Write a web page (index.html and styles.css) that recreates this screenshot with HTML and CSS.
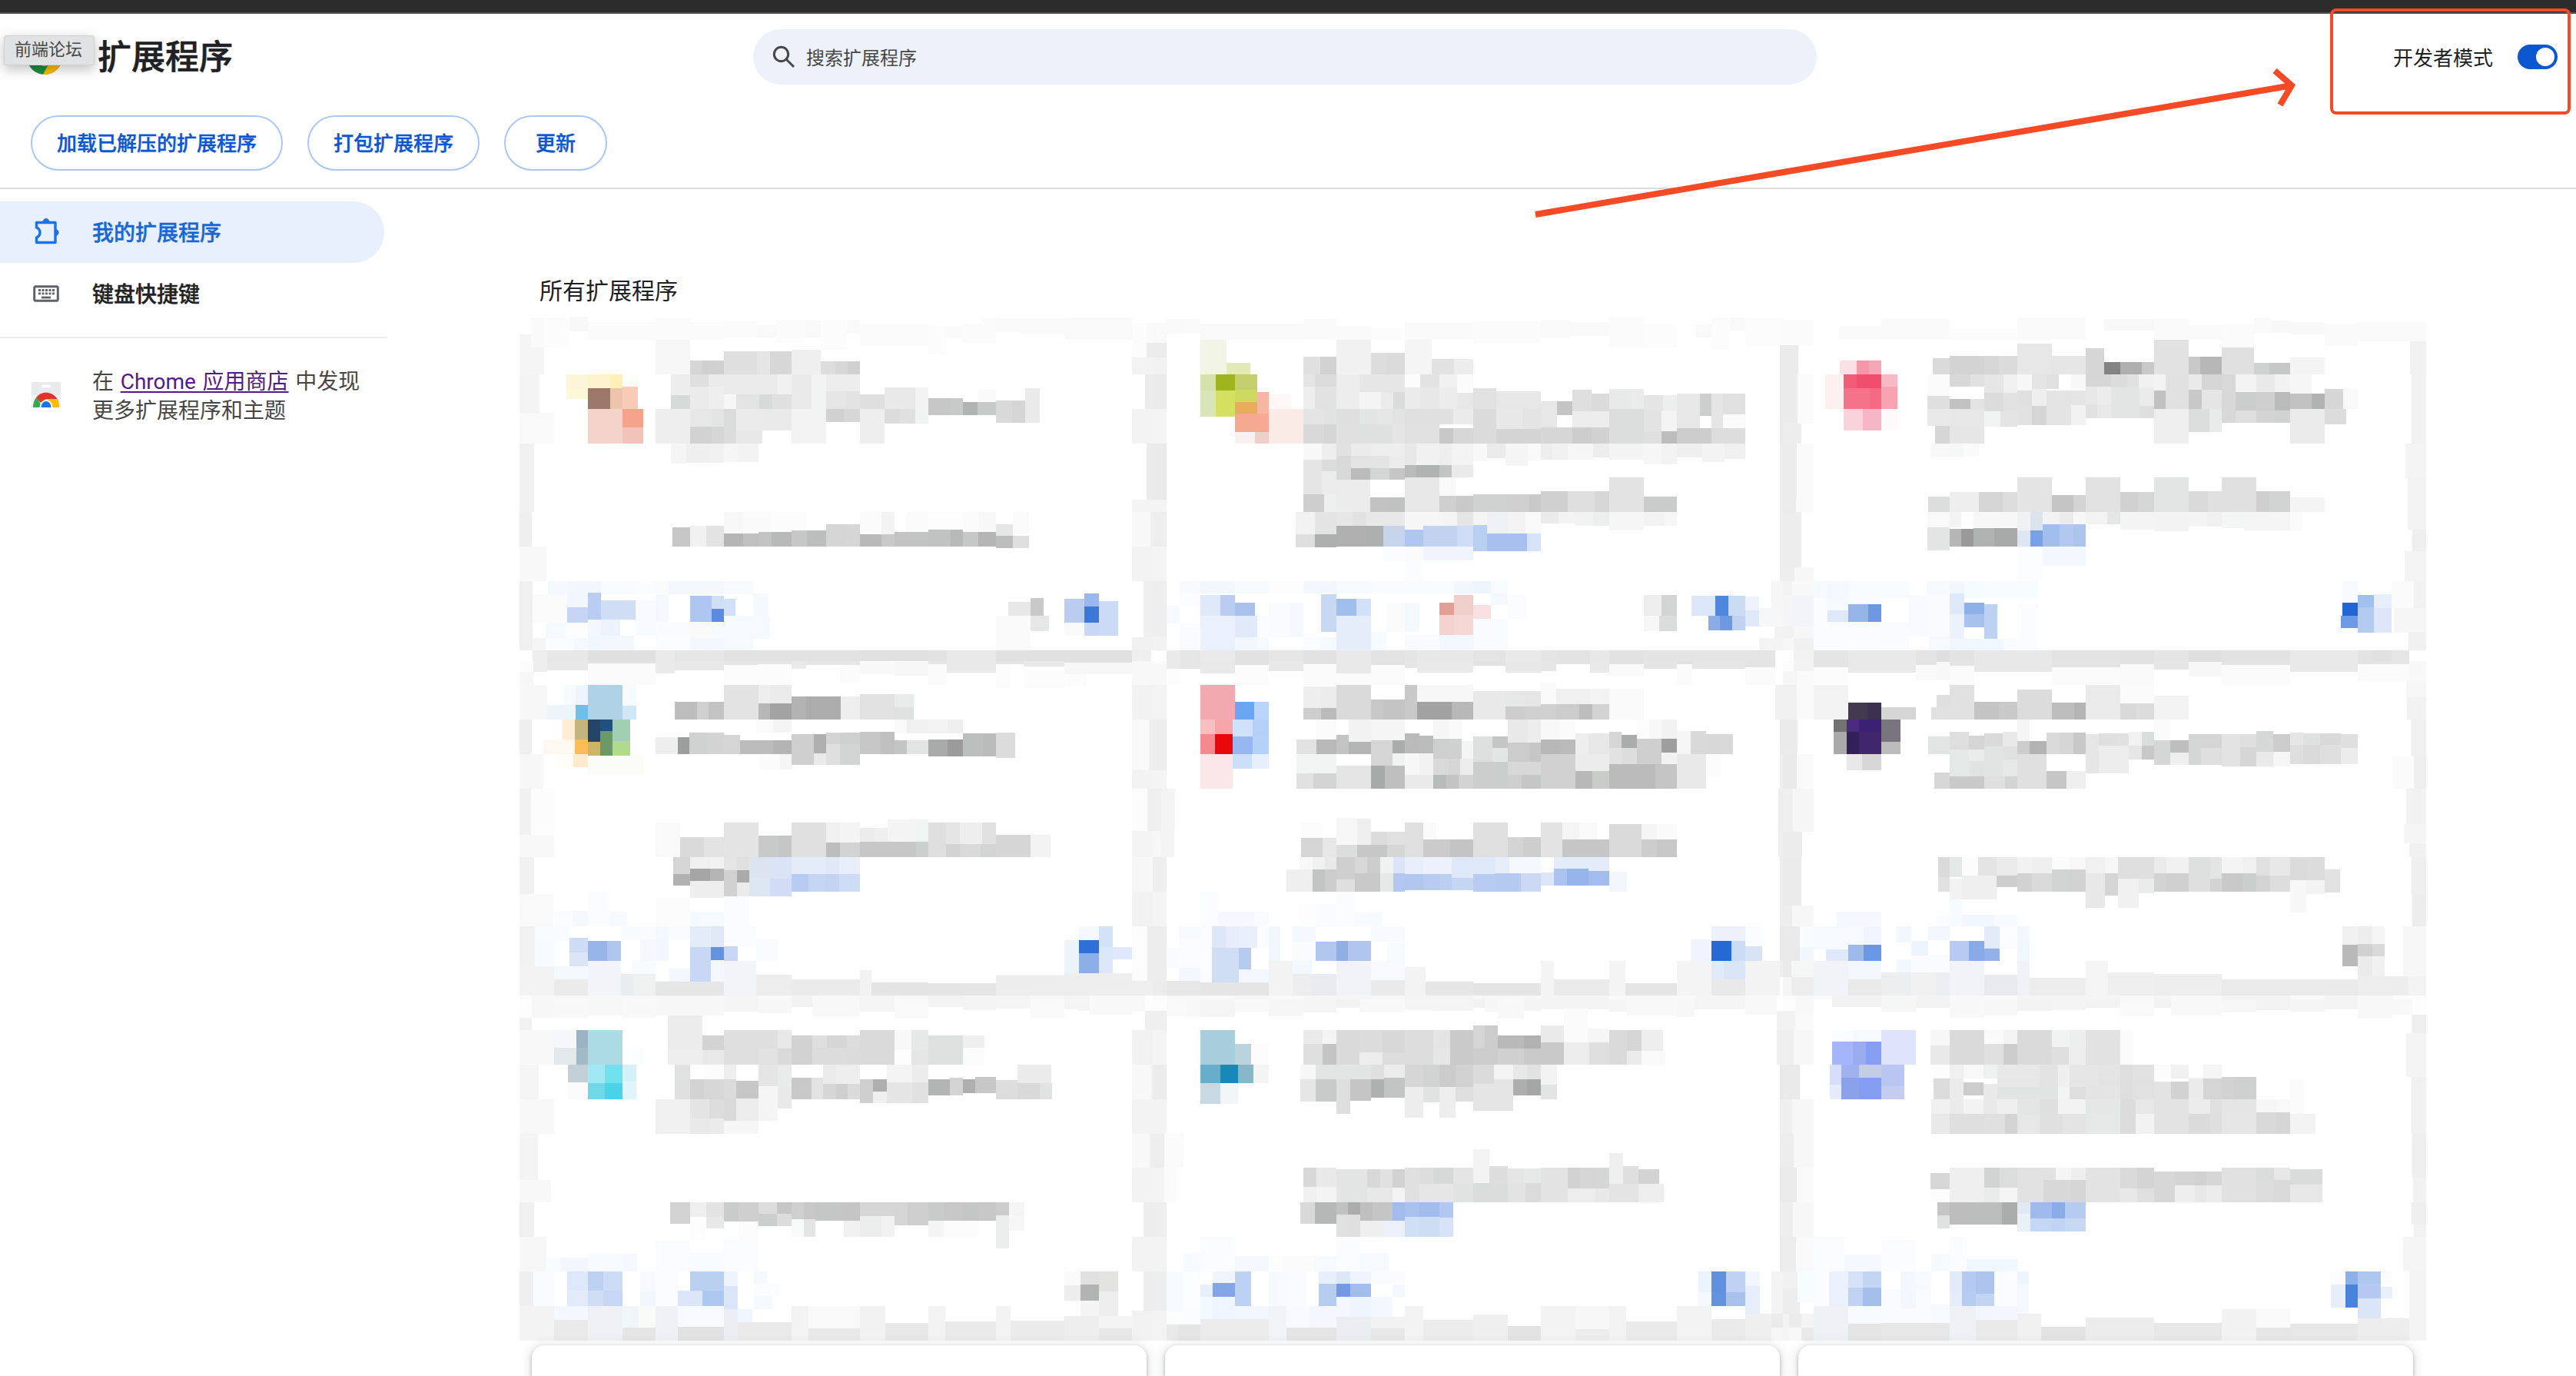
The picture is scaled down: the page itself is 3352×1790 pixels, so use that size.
FILE: index.html
```html
<!DOCTYPE html>
<html lang="zh-CN">
<head>
<meta charset="utf-8">
<title>扩展程序</title>
<link rel="stylesheet" href="styles.css">
</head>
<body>
<div class="window-edge"></div>
<header class="toolbar">
  <div class="toolbar-row">
    <div class="brand">
      <svg class="logo" viewBox="0 0 46 46">
        <circle cx="23" cy="23" r="23" fill="#1e8e3e"/>
        <path d="M23 23L46 23A23 23 0 0 1 21 46L31 27Z" fill="#fbbc04"/>
        <path d="M23 23L3 11.500A23 23 0 0 1 43 11.500Z" fill="#ea4335"/>
        <circle cx="23" cy="23" r="11.500" fill="#fff"/>
        <circle cx="23" cy="23" r="9" fill="#1a73e8"/>
      </svg>
      <h1>扩展程序</h1>
      <div class="tooltip">前端论坛</div>
    </div>
    <div class="search">
      <svg class="search-icon" viewBox="0 0 30 30" fill="none" stroke="#474747" stroke-width="3">
        <circle cx="11.500" cy="11.500" r="9.200"/><path d="M18 18L28 28"/>
      </svg>
      <span>搜索扩展程序</span>
    </div>
    <div class="dev-mode">
      <span>开发者模式</span>
      <span class="toggle"><span class="knob"></span></span>
    </div>
  </div>
  <div class="actions">
    <button>加载已解压的扩展程序</button>
    <button>打包扩展程序</button>
    <button>更新</button>
  </div>
</header>
<div class="page">
  <nav class="sidebar">
    <a class="nav-item active">
      <svg class="nav-icon" viewBox="0 0 40 40">
        <path d="M7.500 7.500H32V33.500H7.500V27C13.500 24.500 13.500 16.500 7.500 14Z" fill="none" stroke="#1a73e8" stroke-width="3.400" stroke-linejoin="round"/>
        <path d="M16 7a4 4.500 0 0 1 8 0zM33 16.500a4.500 4.200 0 0 1 0 8z" fill="#1a73e8" stroke="#1a73e8"/>
      </svg>
      <span>我的扩展程序</span>
    </a>
    <a class="nav-item">
      <svg class="nav-icon" viewBox="0 0 40 40">
        <rect x="4.700" y="10.700" width="30.600" height="18.600" rx="2" fill="none" stroke="#5f6368" stroke-width="3"/>
        <path d="M10 15.500h21M10 19.800h21" stroke="#5f6368" stroke-width="2.800" stroke-dasharray="3 1.500"/>
        <path d="M14 25h12" stroke="#5f6368" stroke-width="2.800"/>
      </svg>
      <span>键盘快捷键</span>
    </a>
    <div class="store">
      <svg class="store-icon" viewBox="0 0 38 33">
        <path d="M0 0H38V33H0Z" fill="#f1f3f4"/><path d="M0 0H38V17H0Z" fill="#e8eaed"/>
        <rect x="13" y="3.500" width="12" height="3.500" rx="1.700" fill="#fff"/>
        <path d="M2 33A17 19 0 0 1 7 19L14 33Z" fill="#34a853"/>
        <path d="M19 22H34A17 19 0 0 1 36 33H24Z" fill="#fbbc04"/>
        <path d="M6.500 20C12 11.500 27 11.500 33.500 22H19L12 27Z" fill="#e0342b"/>
        <path d="M10.500 33a8.500 10 0 0 1 17 0z" fill="#fff"/><path d="M12.500 33a6.500 8 0 0 1 13 0z" fill="#1a73e8"/>
      </svg>
      <p>在 <a>Chrome 应用商店</a> 中发现<br>更多扩展程序和主题</p>
    </div>
  </nav>
  <main>
    <h2>所有扩展程序</h2>
    <div class="masked">
      <svg viewBox="0 174.200 1549.300 1335.800"></svg>
      <svg viewBox="0 0 1530.700 1380"></svg>
      <svg viewBox="0 0 1526 1380"></svg>
      <svg viewBox="0 0 1549.300 1320"></svg>
      <svg viewBox="0 0 1530.700 1320"></svg>
      <svg viewBox="0 0 1526 1320"></svg>
      <svg viewBox="0 0 1549.300 1332"></svg>
      <svg viewBox="0 0 1530.700 1332"></svg>
      <svg viewBox="0 0 1526 1332"></svg>
    </div>
    <div class="cards"><article></article><article></article><article></article></div>
  </main>
</div>
<svg class="annotation" viewBox="0 0 3352 300" fill="none" stroke="#f54a25">
  <rect x="3034" y="13" width="309" height="134" rx="6" stroke-width="4"/>
  <path d="M1998 279L2980 111.500M2960 92L2982 111L2967 136.500" stroke-width="8"/>
</svg>
<script src="mosaic.js"></script>
</body>
</html>
```
FILE: styles.css
```css
* { box-sizing: border-box; }
body {
  margin: 0;
  height: 1790px;
  overflow: hidden;
  background: #fff;
  color: #202124;
  font-family: Roboto, "Noto Sans CJK SC", sans-serif;
}
.window-edge { height: 18px; background: #2c2c2c; border-bottom: 2px solid #555; }
.toolbar { height: 228px; border-bottom: 2px solid #dadce0; }
.toolbar-row { height: 112px; display: flex; align-items: center; }
.brand { position: relative; width: 980px; padding-left: 35px; display: flex; align-items: center; gap: 46px; }
.logo { width: 46px; height: 46px; }
h1 { margin: 0; padding-top: 2px; font-size: 44px; line-height: 60px; font-weight: 500; -webkit-text-stroke: .6px currentColor; }
.tooltip {
  position: absolute;
  left: 5px;
  top: 3px;
  width: 118px;
  height: 39px;
  padding-left: 13px;
  font-size: 22px;
  line-height: 36px;
  color: #474747;
  background: #e1e2e4;
  border: 1px solid #cfd0d2;
  border-radius: 3px;
  box-shadow: 0 5px 16px rgba(0, 0, 0, .25);
}
.search {
  width: 1384px;
  height: 72px;
  padding-left: 25px;
  display: flex;
  align-items: center;
  gap: 14px;
  border-radius: 36px;
  background: #ecf1fa;
  color: #474747;
  font-size: 24px;
}
.search span, .dev-mode > span:first-child { padding-bottom: 2px; }
.search-icon { width: 30px; height: 30px; }
.dev-mode { margin-left: auto; margin-right: 24px; display: flex; align-items: center; gap: 32px; font-size: 26px; }
.toggle { width: 52px; height: 32px; padding: 4px; border-radius: 16px; background: #0b57d0; display: flex; justify-content: flex-end; }
.knob { width: 24px; height: 24px; border-radius: 50%; background: #fff; }
.actions { padding: 20px 40px; display: flex; gap: 32px; }
.actions button {
  height: 72px;
  min-width: 134px;
  padding: 0 32px 3px;
  border: 2px solid #a8c7fa;
  border-radius: 36px;
  background: #fff;
  color: #0b57d0;
  font: 500 26px Roboto, "Noto Sans CJK SC", sans-serif;
  -webkit-text-stroke: .4px currentColor;
}
.page { display: flex; }
.sidebar { width: 504px; padding-top: 16px; }
.nav-item {
  width: 500px;
  height: 80px;
  padding-left: 40px;
  display: flex;
  align-items: center;
  gap: 40px;
  border-radius: 0 40px 40px 0;
  font-size: 28px;
  font-weight: 500;
}
.nav-item span { padding-bottom: 2px; -webkit-text-stroke: .4px currentColor; }
.nav-item.active { background: #e8f0fe; color: #1967d2; }
.nav-icon { width: 40px; height: 40px; }
.store { margin-top: 16px; padding: 37px 0 0 41px; border-top: 2px solid #ebecee; display: flex; gap: 41px; }
.store-icon { width: 38px; height: 33px; margin-top: 20px; }
.store p { margin: 0; padding-top: 1px; font-size: 28px; line-height: 38px; word-spacing: 1.700px; color: #474747; white-space: nowrap; }
.store a { color: #551a8b; text-decoration: underline; text-decoration-thickness: 2px; text-underline-offset: 3px; }
main { padding-left: 166px; }
h2 { margin: 0; height: 154px; padding: 111px 0 0 32px; font-size: 30px; line-height: 44px; font-weight: 400; }
.masked { display: grid; grid-template: 460px 440px 444px / 830px 820px 837px; }
.masked svg { width: 100%; height: 100%; display: block; overflow: hidden; shape-rendering: crispEdges; }
.cards { padding: 6px 0 0 22px; display: flex; gap: 24px; }
.cards article { width: 800px; height: 40px; border-radius: 16px 16px 0 0; background: #fff; box-shadow: 0 2px 4px rgba(60, 64, 67, .35), 0 2px 12px 4px rgba(60, 64, 67, .12); }
.annotation { position: absolute; left: 0; top: 0; width: 3352px; height: 300px; }
```
FILE: mosaic.js
```js
// Each run is "top bottom x colour x colour x ...": tiles between successive
// x values. Two-digit colours are greys, "-" leaves a gap.
const cards = [
`230 296 177 fb 342 fb 426 fb 508;215 230 342 fb 426;227 287 508 fb 588;241 287 588 f9 635;222 305 635 fb 706;224 287 706 f9 743;222 334 743 fc 806;222 270 806 f9 838;235 319 838 fb 1004;244 350 1004 fc 1047;244 290 1047 fa 1088;235 307 1088 fb 1169;215 235 1135 fb 1169;215 267 1169 f9 1228;215 273 1228 f9 1335;212 296 1335 f9 1499
212 325 39 fa 71 fc 133;209 264 133 f8 177;276 325 11 f5 39;325 427 11 f5 71;427 572 11 f4 60;572 688 11 f9 95;688 947 11 f1 47;947 1077 11 ef 41;1077 1208 11 f8 77;1208 1469 11 f0 43
232 363 1499 fc 1534 fa 1568;308 363 1534 ec 1568;363 427 1499 f3 1568;427 558 1531 ec 1568;558 688 1499 f3 1568;688 900 1534 eb 1568;900 947 1499 f4 1568;947 1077 1499 f8 1544 f0 1568;1077 1208 1499 f3 1568;1208 1420 1527 ef 1568;1420 1469 1499 f1 1568
427 520 125 fdf5da 177;427 479 177 fdf4cf 231 fef0b8 261 fdfef7 299;479 520 125 fef8d8 177;479 558 177 9b7869 231 eec4ad 261 f9cbb9 299;473 479 261 f9cbb9 299;558 688 177 f4d3cb 261;558 627 261 f6a38b 312;627 688 261 f2c3b9 312
296 427 342 f7 426;375 427 426 d6 454 d0 508;340 427 508 df 588 e5 620 d7 672;334 427 672 ef 743;377 427 743 dd 778 d7 808 d0 838
427 505 379 ed 426;427 473 426 df 470;427 502 470 eb 637 f1 672 ea 721 f1f4f3 756;473 558 426 eb 470 ee 508;502 558 508 f6 538 e4 594 d6dad8 625 e0 672 ea 721 f2f4f3 756;505 558 379 d6dad8 426;427 491 756 ed 838;491 558 756 e6 805 e3 838;502 558 838 df 898;476 558 898 e9 973 f3 1004;517 581 1004 c7 1057 c8cac9 1088;531 581 1088 b2b4b3 1124 c8cac9 1169;486 531 1124 fa 1169;526 610 1169 d9 1208 d5 1239;479 610 1239 ea 1275
558 688 342 ee 426;558 624 426 e7 478 e2e5e4 508 dc 538;558 639 538 eb 600 ea 672;624 688 426 d2 478 d5d7d6 508 dc 538;639 688 538 e7 601;558 688 672 f3 756;558 607 756 d1 799 d7 838;558 688 838 ee 898;558 613 898 dc 935 e0 973 f2f4f3 1004
688 764 379 f5 416;688 761 416 ef 468 f1 508;688 758 508 f6 542 f3 592
947 1028 508 f8 554 fa 622 fc 710;947 1031 838 fb 890 f3 922;947 1022 951 fb 1004 fd 1088 fb 1126 f8 1169;1005 1077 383 c7 426;999 1077 426 f1 465 e3 508;1028 1077 508 b5 554 c0 592;1022 1077 592 c2c4c3 623 b9 672;1016 1077 672 c7 709 bcbebd 756;993 1077 756 d5 805 d6 838;1031 1077 838 b9 890 c9 922;1022 1077 922 c3 965 c2c4c3 1004;1013 1077 1004 c1c3c2 1058 b9 1088;1022 1077 1088 c6c8c7 1126 b5 1169;993 1037 1169 e6 1210;1037 1083 1169 bcbebd 1210 df 1249;947 1031 1210 fb 1249
1208 1257 80 f5f9ff 127 f2f7ff 209 f8fbff 293 fafcff 342 fb 374 f3f7ff 426 f4f8fe 508 f7fbff 579;1257 1365 43 fb 127;1257 1307 127 f2f7fe 177;1307 1365 127 c7d5f4 177;1251 1353 177 b9cdf2 209;1281 1353 209 cfddf5 293 f8faff 342;1257 1362 342 f5f8ff 374;1263 1362 426 afc6f0 478;1263 1312 478 d0def6 508;1312 1362 478 5a8bdf 508;1275 1339 508 d1dff7 536;1254 1339 579 f5f9ff 616;1339 1425 508 f5faff 620
1353 1414 177 f3f8ff 209 edf3fd 256 - 293 f7fbff 342;1365 1423 75 f5faff 124 fd 177;1362 1423 342 fafbff 426 f9 478 f6faff 508;1414 1469 177 f1f7ff 209 f3f8fe 290;1423 1469 75 fafcff 144 f4f8ff 177 - 342 fafcff 426 f3f7ff 508 f5faff 579;1423 1469 43 f5 75
1286 1339 1198 e7 1253;1272 1339 1253 c9 1284;1339 1469 1169 fa 1253;1339 1397 1253 e6e8e7 1297;1275 1365 1335 b8cdf0 1383;1254 1304 1383 9ab8ee 1419;1304 1365 1383 3c78d8 1419;1283 1414 1419 cbdbf5 1465;1365 1414 1335 fa 1383 c8d8f4 1419
1469 1519 43 ee 78 e7 177 e0 342 ea 388 e6 508 e2 838 e1 1004 e2 1049 e9 1169 e1 1499 ef 1546`,
`45 102 34 f9 78 fa 116;63 126 116 f9 366;45 126 366 fa 446;72 126 446 fa 530;80 126 530 fc 612;61 126 612 fa 678 fa 778;53 137 778 fb 943;47 120 943 fa 1012;58 110 1012 f9 1109;37 155 1109 fb 1193;68 155 1193 fc 1273;66 117 1318 f9 1357;39 165 1357 fc 1402;39 90 1402 f9 1439;42 147 1439 fc 1523 fb 1568
60 138 0 f9 34;138 195 0 ec 34;195 261 0 f2 34;261 396 0 eb 34;396 531 0 f4 34;531 750 0 ea 34;750 798 0 f4 34;798 933 0 ee 34;933 1068 0 f4 34;1068 1285 0 ee 34;1285 1338 0 f2 34
147 531 1523 eb 1568;531 1068 1524 ed 1568;1068 1173 1503 f6 1568;1173 1245 1473 f7 1553 f2f4f8 1568;1245 1290 1510 f3 1568;1290 1338 1473 f4 1568
126 261 116 f2f4e6 179;216 261 179 e3eab8 237;261 324 116 d5e2ae 153 9fb51d 200 c3d06b 254;324 426 116 d8e5b9 153 d6e060 200;321 369 200 cdda61 254;369 414 200 e9ac5c 254;330 414 254 f8b5a4 282;414 486 200 f4a990 254 f8a995 282;486 531 200 f7f2ef 248 eed0c8 282;339 396 282 fef7f6 336;396 531 282 faebe7 366
126 261 446 f1 530;192 261 366 e0 407 d2 446;177 261 530 dd 567 db 612;126 312 612 f5 678;201 261 678 e2 732 ed 778;261 309 366 e5 394 db 446;261 396 446 ed 502 e6 612;261 312 612 fc 650 e3 696 f1 739 fb 778;309 396 366 ee 394 e2 446;330 396 502 f4 554 eb 584 db 612;312 396 612 eb 650 e8 696 ec 739 e7 778;312 333 739 fc 778;315 396 778 e2 834;327 396 834 e7 943;366 468 943 e7 982;366 420 982 c4 1019;321 405 1019 df 1066;336 405 1066 db 1109;318 396 1109 e7eae9 1165 eb 1193;342 402 1193 e5 1239 edefee 1273;336 471 1273 e7 1329 - 1357 e5 1385;336 423 1329 cdcfce 1357;336 417 1385 e1 1439
396 456 366 e4 416 e0e3e2 446 df 502 e2e5e4 546 e6 582 e1e4e3 612 e0 730 eb 778;396 531 778 db 834;396 474 834 e8 897 e4 943;405 468 1019 ed 1109;396 531 1109 dbdedd 1193;402 483 1193 e3 1236 f4 1273;417 471 1385 fb 1439;456 531 366 d9 416 d5 446 e0 502 dfe0e0 582 e5 612 e1 696;471 531 696 c8 730 d7 778;474 531 834 d4 943;468 531 943 d6 1019 cd 1066 d1 1109;483 531 1193 df 1236 bd 1273;471 531 1273 cd 1357 dd 1439
531 594 366 f8 411 ee 446;531 579 446 e1 482 eb 530 ee 612;531 615 612 e8 640 f1 696 ee 726 f3 778;531 600 778 f8 812;531 588 812 eb 857;531 618 857 f5 911;531 597 911 f9 943;531 594 943 ee 971 f1 1008 f6 1070;531 585 1070 ed 1109;531 594 1109 f4 1193;531 612 1193 f6 1236 f3 1273;531 585 1273 ef 1335;531 603 1335 f3 1389;531 591 1389 f0 1439;579 672 446 d9 482;579 627 482 e4 575 ec 612;594 729 366 e5 411;594 639 411 dadddc 446;639 798 411 ec 446;672 798 446 ec 528;627 672 482 bb 528 d3d6d5 575 c6 612;615 663 612 b9bbba 640 b1b3b2 696 c3c5c4 726 ea 778;663 798 612 e7 696;663 735 696 f9 737
729 798 366 ce 416 edf0ef 446;741 798 528 c2 575 c0c2c1 612;735 798 696 cf 737 c9 778;729 798 778 cfd2d1 857 d0 915 c9 943;717 798 943 d0 1008 df 1073 d7 1109;663 798 1109 e3 1193;738 798 1193 cacccb 1273
798 885 347 f2 394 e4 446;798 853 446 e6 485 e2 519;798 853 519 e8 612;798 867 612 f6 707 f4 739;798 852 739 e5 778;798 852 778 f4 812 eef0f4 862 f3 905 f9 943;798 843 943 eb 986 f3 1027;798 852 1027 f2 1070 edefee 1109;798 870 1109 f6 1193;798 852 1193 f3 1243 f6 1273;885 936 347 df 394 aeb0af 446;853 933 446 b0 519 aeb0af 560 c6d5ec 612;867 933 612 afc7ef 657;852 933 657 c2d3f2 739 cedcf5 778;849 951 778 b9cff1 812;882 951 812 a7c0ed 909 d7e3f8 943;852 882 812 eef0f4 862 f3 905 f9 943;933 987 560 fafcff 612 fb 657 f0f5fd 778;987 1068 612 fafcff 657
1068 1116 65 f8faff 116 f2f7ff 200 f6fbff 282 fd 366 f2f7ff 446 f5fafe 530 f9fbff 612 f8fbff 732 f2f7ff 778 edf5ff 821 f8fbff 862;1116 1163 65 fafcff 116;1122 1203 116 e0e9f9 164 bacdf1 200;1152 1203 200 a9c2ed 248 - 282 f9fbff 334 f4f8ff 366;1203 1338 116 eaf1fc 200;1203 1286 200 e2eaf9 254 fbfcff 282 f9fbff 334 f4f8ff 366;1163 1233 34 f6f9ff 65;1233 1338 65 f9fbff 116;1286 1338 200 f3f7fe 254 f6faff 282 - 366 fafcff 409 f4faff 446;1119 1266 409 c7d8f3 446;1137 1203 446 a1bfeb 495 d3e0f9 530;1203 1338 446 e5ecfa 530;1266 1338 530 f7fbff 567;1152 1266 567 fb 612 f4f8ff 648;1277 1338 612 f8faff 696 f3f7ff 778 f7f9fd 862
1152 1200 696 e39f96 732;1122 1200 732 f0cec9 778;1161 1215 778 f7e0df 821;1200 1278 696 f3d3d0 732 f5d8d6 778;1116 1161 821 f4f9ff 862;1122 1215 862 fbfcff 908;1215 1338 778 fafbff 862
1122 1203 1193 ee 1236 d3d5d4 1273;1203 1263 1193 f7 1230 dbdddc 1273;1125 1203 1309 dde7fa 1366 5087dc 1398 cbdbf4 1439;1203 1260 1350 8aade6 1378 6d99e3 1407 bfd2f2 1439;1128 1182 1439 edf2fc 1473;1182 1245 1439 dee8f9 1473
1338 1410 34 ea 68 e6 116;1338 1428 116 ea 200;1338 1395 200 e2 282;1338 1419 282 e6 366;1338 1392 366 e2 446;1338 1428 446 e9 530;1338 1398 530 e3 612;1338 1407 612 e5 642;1338 1425 642 e8 778;1338 1392 778 e4 857;1338 1425 857 e9 943;1338 1419 943 e5 980;1338 1395 980 e3 1062;1338 1425 1062 e8 1109;1338 1392 1109 e2 1193 e4 1310;1338 1404 1310 e5 1512`,
`48 148 0 fb 73;72 123 134 fa 233;43 126 233 fa 396;84 126 396 fc 556;39 126 556 fa 718;45 90 762 f8 881;42 126 881 fa 963;69 126 963 fa 1041;66 156 1041 fb 1118;39 99 1118 fa 1158;51 99 1158 f8 1203;57 105 1203 f8 1285;63 150 1285 fa 1364;57 132 1364 fa 1526
148 261 0 eb 36;261 453 0 eb 35 fb 73;453 531 0 ed 44;531 743 0 ec 33 fa 73;743 798 0 ec 31 f9 73;798 1014 0 ed 44;1014 1068 0 ee 27 f7 73;1068 1125 0 f3 22 f8 73;1125 1245 0 f5 22 f2f4f8 73;1245 1290 0 f2 26 f7 73;1290 1338 0 f7 26 f1 73
132 261 1487 f1 1526;261 531 1491 f2 1526;531 663 1477 f4 1526;663 867 1483 f3 1526;867 951 1493 ef 1526;951 1068 1475 f4 1526;1068 1173 1444 fb 1497 f2 1526;1173 1269 1449 f6 1526;1269 1338 1484 f1 1526
207 261 135 f9e1e7 175 f696a9 204 f5a7b5 233;261 315 144 f35b76 175 f04e6b 233 f8b9c7 272;261 396 100 fcf0f1 144;309 315 233 f8b9c7 272;315 396 144 f57389 206 f46983 233;309 396 233 f7a3b1 272;396 480 144 f8d2db 190 f7b6c6 233 fdfafc 272
198 261 356 da 396;189 261 396 d3 478 d7 513 db 556;141 261 556 e7 638;189 261 638 e6 718;159 309 718 d6 762;213 261 762 83 800 af 851 c9 881;126 261 881 e2 963;192 261 963 c9 990 b7 1041;156 261 1041 e0 1118;216 261 1118 cfd2d1 1154 c6c8c7 1203;195 261 1203 f4 1285
261 345 343 fb 396;261 309 396 d8 445 e1 478;261 333 478 e6 523 f0 556;261 324 556 f7 591;261 318 591 e5 625 e1 655 - 684 f8 718;261 312 718 d6 779 dc 817 e1 845 f1 881;261 324 881 f3 908;261 396 908 e1 963;261 321 963 ea 994 d5 1041;261 450 1041 d8 1074;261 330 1074 f3 1123 e9 1167 f2 1203;261 336 1203 f6 1254
345 396 343 df 396;357 405 396 c2 445 e3 478;333 405 478 dc 523 e2 556;324 384 556 e0 591;318 384 591 ef 625;324 459 625 e4 684 e5 718;309 378 718 e8 746 ec 779;312 432 779 e2e5e4 846;312 384 846 eb 881;324 396 881 c1 908;321 396 963 c8 994 e5 1041;330 402 1074 cbcecd 1123 cf 1167 babcbb 1203;336 396 1203 c2 1254 b1b3b2 1285;318 396 1285 d6 1329 f9 1364
396 462 343 e9 396 e7 478;405 465 478 f1f4f3 516 e4 556;384 459 556 e2 591 d5 625;381 459 684 f2 718;378 432 718 e2 746 e9 779;384 432 846 de 881;396 531 881 ef 963;396 486 963 dbdedd 1012 e9ebea 1041;402 450 1074 de 1123 d4 1167 d1d3d2 1203;396 531 1203 eb 1285;396 456 1285 dc 1336;462 531 361 d6 396 e6 478;531 582 350 f8 396 f5f8f7 428 fa 465
738 798 345 dbdedd 396;720 798 396 ee 465 d5 521 dd 556;663 798 556 e4 638;732 798 638 c5 689 d4 718;663 798 718 e2 800;720 798 800 d1 842 d5 881;663 798 881 e2e5e4 963;717 798 963 da 1008 e0 1041;663 798 1041 e0 1123;717 798 1123 cf 1154 d1d4d3 1203;741 798 1203 f4 1285
798 858 343 f9 396 f3 423 fe 452 f7 556;798 870 556 eff1f2 587 dce3ec 616;798 846 616 f3 656 eb 689 f7 718 f3 769 e4e7e6 800;798 866 800 f4 881;798 872 881 f3 963;798 855 963 f4 1007 f0 1041;798 860 1041 f3f6f5 1094;798 869 1094 f5 1203 fb 1233;858 948 343 e2e5e4 396;864 933 396 b6 423 9a 452;861 933 452 b0b2b1 501 a8aaa9 556;870 933 556 dfe6f3 587 7aa0e7 616;846 933 616 a2beed 656 b3c7ef 689 abc5ef 718;933 1068 556 fcfdff 616;933 1008 616 f4f8fe 718
1068 1134 73 f5faff 106 f6f8ff 155 f8fbff 299 - 341 f6faff 396 f1f6ff 430 f5fcff 478 f9fcff 508 f6fcff 606;1134 1338 73 fafcff 155 f9fbff 233;1134 1182 106 f5faff 155;1182 1227 106 dee8f8 155;1158 1227 155 95b5e8 202 6c99e1 233;1227 1338 155 fafcff 233 fafbff 299;1125 1284 299 f8faff 341 f9fbff 396;1284 1338 346 f6f9ff 396;1116 1197 396 dde8f9 430;1152 1197 430 8eb1e8 478;1197 1293 396 ebf2fc 430;1197 1248 430 a9c2ed 478;1158 1293 478 bdd1f2 509;1293 1338 396 f1f7ff 523 f9fbff 606;1158 1338 556 fafcff 606
1068 1152 1327 f8faff 1364;1152 1203 1327 2266d6 1364;1203 1251 1324 6d9ae2 1364;1122 1170 1364 a2c0ed 1402;1119 1173 1402 e8effb 1444;1170 1269 1364 b5caf1 1402;1173 1269 1402 dde7f9 1444
1338 1404 73 e5 155;1338 1425 155 e9 315;1338 1395 315 e4 365;1338 1383 365 df 396;1338 1398 396 e3 454;1338 1422 454 e8 638;1338 1404 638 e3 800;1338 1392 800 e2 881;1338 1413 881 e5 963;1338 1383 963 df 1041;1338 1395 1041 e2 1203;1338 1422 1203 e9 1364;1338 1392 1364 e3 1398;1338 1401 1398 e1 1444;1338 1395 1444 e6 1486;1338 1419 26 f2 73`,
`0 42 11 fc 45 ee 78;42 93 11 f6 45;0 36 78 e8 177;0 9 177 e3 342;9 93 177 fb 342;0 48 342 ea 388;0 36 388 e8 508;15 93 508 fc 592;0 15 508 e6 592;0 12 592 e6 672;12 93 592 fc 672;0 30 672 e9 707;0 15 707 e6 838;15 84 790 fb 838;6 51 838 f8 922;3 57 922 f7 1004;0 12 1004 e6 1049;12 93 1004 fb 1049;0 45 1049 e9 1169;0 12 1169 e3 1236;12 105 1169 fc 1204;0 21 1236 e8 1335;21 105 1236 fc 1335;0 6 1335 e1 1499;6 51 1335 f7 1499;51 96 1335 fc 1388;0 93 1499 f8 1568
93 228 11 f7 78;228 363 11 ef 41;363 498 11 f7 69;498 678 11 f1 39 fc 95;678 765 11 f8 95;765 909 11 f1 47;909 1035 11 f9 93;1035 1305 11 f2 49;1191 1305 11 f3 95
93 228 1499 f2 1568;228 426 1499 f9 1540 ef 1568;426 498 1499 f3 1568;498 663 1499 fc 1536 ef 1568;663 765 1499 f4 1568;765 900 1499 f7 1553 f0 1568;900 1035 1499 f2 1568;1035 1248 1499 fc 1536 ed 1568;1248 1305 1499 ef 1568
93 171 119 f6fbff 147 edf6fc 177;93 228 177 afd2e7 261;93 174 261 f6fbff 295;171 228 78 edf5fa 147 6fbfe8 177;174 228 261 d0e8f6 295;228 306 116 feedd2 146 c4b580 177;228 315 177 24446a 207;228 273 207 20507e 237;228 312 237 a0d0b1 280;306 363 69 fef8f0 146 fbbd58 177;315 375 177 ccb564 207;273 375 207 6a9a68 237;312 369 237 b1da8c 280;363 414 100 fffdf8 142 fdebcd 177;369 444 177 fafcf5 312
159 228 388 bd 442 d0 470 c3 508;93 228 508 e3 592;93 165 592 ee 620 eb 672;165 228 592 b7 620 a3 672;138 228 672 b3 707 ad 791 ee 838;129 228 838 e2 922;129 180 922 eaecec 969;180 228 922 e0e2e1 969
228 279 586 fb 627 f4 672;228 282 922 fa 952 f0 1004 f3 1051 ef 1088;297 363 342 ee 396 9c9e9d 424;279 363 424 cfd2d1 466 d3 508;288 363 508 d5 547;309 363 547 bc 627 b4 672;285 405 672 cf 726;285 360 726 af 756;279 324 756 d4 790 cfd1d0 838;324 405 756 df 790 d2d5d4 838;360 405 726 ea 756;276 363 838 c7 889 c0 922;309 363 922 c2c5c4 952 e2e5e4 1004;306 372 1004 a9abaa 1051 9b 1088;282 372 1088 bcbfbe 1137 babcbb 1169;279 378 1169 dc 1215;363 423 594 fb 644 f5 672
630 765 342 f9 401;687 765 401 da 459 e3 508;630 765 508 e4 592;681 765 592 c8cac9 640 c6 672;630 765 672 e0 756;630 708 756 f0 790 f4 838;708 765 756 bd 790 d3 838;651 705 838 ec 874 ef 905;618 705 905 f4 973 f1f4f3 1004;705 765 838 c7 975 cdcfce 1004;630 765 1004 df 1047;630 714 1047 e5 1081 ee 1135 e1 1169;714 765 1047 d3 1081 da 1131 d2d5d4 1169;678 765 1169 d6 1253 f3 1301
765 831 385 d5 426;765 810 426 f0 474 f2 508;765 816 508 e5 539 e0 569;831 876 385 b0b3b2 426;810 858 426 a6 474 b5 508;816 918 508 d1 539;816 864 539 aa 569;858 924 426 ee 508;864 918 539 eb 569;765 849 569 dce4f0 619 dbe4f7 672;849 918 569 dde7f3 619 d1ddf6 672;765 831 672 e4ebf9 756 e1e8f7 788 e8effa 838;831 900 672 b7ccf0 713 c5d6f3 756 c2d4f2 788 cfdcf5 838
900 1035 177 fafcff 229;975 1035 95 fafcff 140 f5f9ff 177;978 1035 229 f6faff 273;924 1035 342 fc 426;978 1035 426 f5faff 508;918 1035 508 fafcff 569
1035 1092 49 f8fbff 133;1092 1191 49 f6fbff 95;1080 1137 133 cfdcf6 177;1137 1191 133 dbe5f7 177;1092 1170 177 98b5ea 224 adc5ef 258;1035 1086 258 f7fbff 305 f9fbff 342 f5f8ff 373 f9fbff 426;1086 1170 305 f5f9ff 342 f3f7ff 373;1035 1116 426 e4ecfa 476 e0e8f8 508 fafcff 586;1116 1251 426 c8d8f4 476;1116 1167 476 6393df 508;1113 1170 508 c7d6f4 541;1167 1251 476 f3f7fe 508;1086 1170 586 f9fbff 638
1191 1242 95 f4f8ff 177;1170 1305 177 f2f4f9 258;1170 1221 286 f7faff 342;1200 1251 373 f3f7ff 426;1170 1305 508 f2f4f9 586;1242 1305 95 eb 177;1221 1305 258 e8edef 287 eff1f0 342;1251 1305 342 e6 508;1224 1305 586 ed 672;1242 1305 672 eb 838;1206 1305 838 f2 866;1254 1305 866 e4 1004;1257 1305 1004 e5 1169;1227 1305 1169 ed 1335;1218 1305 1335 ee 1499
1089 1218 1335 ebf3fb 1370;1035 1089 1370 f5f9ff 1419;1035 1116 1419 d3e1f9 1452;1089 1140 1370 2f6fd7 1419;1140 1218 1370 8cafe8 1419;1116 1218 1419 dce7fa 1452;1116 1164 1452 dfe8fb 1499
1305 1320 11 fb 41 f7 508 f5 592 f8 672 f2 722 f8 838 f5 922 f8 1004 f2 1088 f4 1253 f8 1335 f4 1395 f8 1530`,
`0 12 0 fb 34;12 93 0 f8 34;93 228 0 f3 34;228 426 0 ed 34;426 498 0 f4 34;498 663 0 ef 21 f4 54;663 765 0 f7 21 f4 52;765 900 0 ee 34;900 1035 0 f4 34;1035 1248 0 ed 34;1248 1305 0 ec 34
0 30 34 ea 68 e6 116;0 48 116 e9 200;0 15 200 e2 282;0 39 282 e8 366;0 12 366 e2 446;0 48 446 e9 530;0 15 530 e2 612;0 27 612 e6 642;0 45 642 e9 778;0 18 778 e2 857;0 45 857 e8 943;0 39 943 e6 980;0 12 980 e3 1062;0 45 1062 e9 1109;0 12 1109 e2 1193;0 30 1193 e5 1273;0 12 1273 e2 1310;0 30 1310 e6 1439;0 24 1439 e4 1512
30 93 34 fd 68;15 93 200 fc 282 - 366 fb 446;48 93 446 fb 530;15 93 530 fb 612;12 60 1109 f9 1193;12 93 1273 fb 1310;24 93 1439 fb 1512
93 228 1512 f1 1564;228 363 1523 eb 1566;363 498 1523 ef 1564;498 663 1519 ed 1555;663 765 1519 ef 1547;765 1035 1523 ed 1568;1035 1170 1523 ea 1568;1170 1233 1523 ef 1551
93 228 116 f2aab0 200;159 228 200 6ca5f1 246 bbd4f9 282;228 285 116 f8bfc1 151 f8a5a8 194;285 363 116 f6898f 151 ea0808 194;228 294 194 d0e2f9 243 b4d0f8 282;294 363 194 96b7ef 243 b6d1f9 282;363 498 116 fce7e8 194;363 420 194 cbdff9 241 e7effc 282
99 183 366 ee 409 ec 446;183 228 366 ce 409 bb 446;93 228 446 da 530;150 228 530 c8 560 c4 612;93 228 612 c9 642;93 159 642 f7 778;159 228 642 a2 726 b8 778;117 228 778 e9 857;117 177 857 e5e8e7 904 e6 943;177 228 857 cc 904 d0 943;84 168 943 f9 980;108 168 980 f0 1062 f3 1109;108 228 1109 f9 1193;168 228 943 d0 980 cc 1036 bd 1068 d3 1109
228 315 398 fb 446 - 476 f2 530 f5 612;228 300 681 f6 719 f9 750;228 318 862 e9 911 ed 943;228 306 943 f8 990 fb 1027;228 303 1176 fc 1205 f8 1236 f2 1273
306 363 349 e2 398 b9 446;288 363 446 c1c4c3 476;315 363 476 b5 530;309 408 530 d5 582;309 360 582 a9acab 612;282 360 612 ba 648;291 360 648 bc 681;303 381 681 cdd0cf 719 d1 750;312 381 719 d0 750 f3f6f5 778;294 393 778 dde0df 825;294 339 825 c5 862;339 393 825 e3e6e5 862;318 393 862 cc 914 c6 943;306 363 943 b8 990 ba 1027;282 363 1027 ee 1058 e7 1109;276 339 1109 d6 1139;288 339 1139 aaadac 1176;303 402 1176 cf 1236;303 357 1236 9e 1273;273 363 1273 f6 1307 d9 1344;285 363 1344 d8 1409
363 438 349 f3f5f4 390 f1f4f3 446;438 498 349 e1 390 d4 446;408 498 446 e5 530 a8aaa9 564 bf 612;360 408 582 f0f3f2 612;360 444 612 f7 648 f2 681;381 444 681 da 719 d6 747 ed 778;444 498 612 ea 681 b8bbba 713 c3 743 d3 778;393 498 778 cbcecd 862;393 444 862 d8 943;444 498 862 cf 896 c4c7c6 943;363 498 943 d1 1027;363 429 1027 ec 1109;429 498 1027 b8 1068 caccca 1109;339 402 1109 e2 1139 dbdedd 1176;357 402 1236 f2 1273;402 498 1109 bb 1221 c5 1273;363 498 1273 e9 1344;363 446 1344 fc 1382
630 690 360 fc 412;690 765 360 d5 413 e7 446;612 717 446 f7 497;615 717 497 ef 530;666 717 530 dc 569 e1 612;717 765 446 dbdedd 497 c7 569 d6 612;630 765 612 e0 657;630 696 657 fa 689;696 765 657 cb 722 c4 778;630 765 778 e0 862;687 765 862 d4 900 ce 943;630 765 943 e3 995;630 696 995 f5 1036 f9 1079;696 765 995 c6 1109;636 765 1109 da 1187;636 696 1187 f5 1225 fa 1273;696 765 1187 cd 1225 c8 1273
765 813 357 f8 388 f1 418 e9 446;765 852 446 cf 491;765 828 491 d8 521 cd 553;765 828 553 eff2f1 584 dbe5f7 612;765 831 612 e8effb 657 ecf1fb 726;765 846 726 dfe8f8 778;765 831 778 dfe8f8 833 e7eefb 866 f5f8fe 943;813 900 325 ef 388 c1c4c3 418 cc 446;852 900 446 df 491;828 900 491 c9 553 e5e8e7 584 b2c8ef 612;831 894 612 b1c7ef 657 b8ccf1 697 bbcff2 726;846 894 726 c5d6f2 778;831 900 778 b8ccf1 833;828 900 833 b5caef 894 ccd9f4 943;765 825 974 e5ecf9 1109;825 876 943 dce6f9 974;810 876 974 abc3ee 1006 97b4ea 1058;819 876 1058 a2bced 1109;822 900 1109 f3f7fd 1152
900 1035 116 fafcff 158 - 446 fafcff 491;978 1035 158 f5f9ff 246 f9fbff 282;948 1035 357 fd 398 f9fbff 446;981 1035 491 f6fbff 558
1035 1083 63 f7faff 116;1083 1200 63 fbfcff 116;1120 1198 34 f9fbff 63;1035 1119 144 dde7f7 177 e7edfa 209 e9f0fb 254 fafcff 282 f0f7ff 310;1119 1254 144 cfdef5 209;1119 1203 209 b7cbef 239;1119 1170 282 f1f7ff 310;1203 1254 209 f3f7ff 282;1198 1248 63 f3f7ff 116;1035 1254 116 fafcff 144;1035 1095 340 f4f9ff 396 - 530 f8faff 612;1095 1170 340 f9fbff 396 b2c7ee 446;1092 1170 446 8fafe5 474 afc5ee 530;1101 1170 569 f5faff 612;1170 1221 340 f3f8ff 386;1170 1245 530 f7f9ff 612;1170 1305 446 f1f3f7 530;1170 1305 282 f3 340;1221 1305 340 ededee 386 eaebef 446
1248 1305 34 e7 116;1254 1305 116 e5 282;1245 1305 530 ea 612;1194 1305 612 f3 663;1251 1305 663 e6 778;1257 1305 778 e4 943;1170 1305 943 f4 974;1242 1305 974 eb 1109;1170 1305 1109 f4 1148;1257 1305 1148 e5 1273;1170 1305 1273 f4 1357;1242 1305 1357 e9 1439;1170 1305 1439 f3 1523
1035 1092 1357 ecf1fb 1439;1035 1113 1439 fafcff 1480;1086 1170 1307 f0f4fe 1357;1092 1170 1357 2569d3 1406 ccdcf5 1439;1113 1170 1439 d8e3f6 1480;1170 1242 1357 e1eaf9 1387 dae5f7 1439
1305 1320 0 fc 34 f8 200 f5 282 f8 366 f5 530 f7 612 f4 778 f7 943 f4 1109 f8 1316 f5 1439 f8 1516 fe 1568`,
`0 39 0 fc 26;0 39 26 f3 73;39 93 0 f6 34 fa 73;93 228 0 f0 33 fa 73 f3 155;228 363 0 eb 35;363 498 0 ea 33 f9 73;498 666 0 ef 24 f6 73;666 765 0 ec 46;765 954 0 eb 44;954 1035 0 ed 22 f7 73;1035 1233 0 ea 40;1170 1233 0 ea 20 f4f7f6 73;1233 1305 0 f5 20 ed 73
0 24 73 e4 155;0 45 155 e9 315;0 15 315 e3 365;0 3 365 df 396;0 18 396 e4 454;0 42 454 e8 638;0 24 638 e4 800;0 12 800 e2 881;0 33 881 e6 963;0 3 963 df 1041;0 15 1041 e3 1203;0 42 1203 e9 1364;0 12 1364 e3 1398;0 21 1398 e3 1444;0 12 1444 e6 1486
24 93 73 fc 155;15 75 315 fa 365;3 75 365 f8 396;18 93 396 fb 454;24 93 638 fb 800;12 93 800 fa 881;3 60 963 f7 1041;15 96 1041 fb 1203;12 78 1364 fb 1486;0 78 1486 f8 1526
78 140 1479 f7 1526;140 228 1480 f2 1526;228 372 1491 f0 1526;372 498 1447 fb 1497 ef 1526;498 636 1479 f2 1526;636 711 1473 f5 1526;711 765 1486 f1 1526;765 912 1491 ef 1526;912 1035 1493 ed 1526;1035 1230 1471 f7 1526;1230 1305 1484 f3 1526
162 228 155 423a51 201 3b3150 233;180 228 233 d5 315;228 276 120 73 151;276 363 120 aa 151;228 276 151 4b2b7d 181 3b2173 233;276 363 151 33205b 181 41266c 233;228 315 233 78757c 279;315 363 233 bc 279;363 426 151 e8 188 d7 233
132 228 365 df 396;180 228 352 e1 396;93 228 396 e1 454;159 228 454 c4 512 c9 556;111 228 556 dc 638;162 228 638 be 691 b5 718;93 228 718 eb 800;165 228 800 d9 838 dc 881;135 228 881 f3 963;93 159 800 fb 881
228 312 556 f5 585;228 309 881 fb 918;294 363 345 e2e5e4 396;276 345 396 de 441;291 345 441 d5 478;282 333 478 da 521;276 333 521 e9 556;312 363 556 cd 585 b3 625;279 363 625 da 656 d6 689 c8 718;285 438 718 e6 749;282 330 749 df 790 e1 820;276 330 820 f2 851 d9dddb 881;309 405 881 d4d7d6 919;309 357 919 be 963;285 405 963 d3d6d5 992;285 339 992 d5 1041;285 411 1041 e3 1085;285 336 1085 df 1123;273 354 1123 d4d8d6 1163;285 354 1163 cc 1203;279 327 1203 e6 1234;282 327 1234 dee1e0 1274 d9 1324;285 339 1324 df 1364
345 450 396 e4e8e6 441;345 390 441 eb 478;333 450 478 e1e4e3 521;333 384 521 e1 556;390 450 441 e0e3e2 478;384 450 521 e5e8e7 556;363 498 556 e0 625;330 438 749 ed 820;330 384 820 e6 851 c8 881;357 405 919 ef 963;339 405 992 df 1041;336 411 1085 d6 1123;354 411 1123 ea 1163 f6 1203;327 402 1203 df 1234 da 1274 df 1324;339 402 1324 ec 1364;435 498 359 d7 396;450 498 396 c9 478 df 527 d2d5d4 556;429 498 625 c6 673 ef 718
765 843 368 da 396 e5e8e7 425;765 837 425 fc 463 e4 507;765 837 507 eb 556;765 828 556 f2 591 ef 638;765 813 638 fb 680 f8 718;765 828 718 f0 764 f7 795;765 849 795 df 881;765 828 881 eb 910 f1 963;765 849 963 dde0df 1014 e4 1041;765 828 1041 f4 1091 f0 1123;765 837 1123 e1 1156 e8 1203;765 855 1203 db 1243 dc 1285;813 903 1285 e2 1322;843 900 368 e1 396;849 930 396 f2 425;837 930 425 ef 507;837 882 507 ce 556;828 900 556 d2 591 da 638;813 900 638 d1d4d3 680 d2 718;828 963 718 e8 764;828 915 764 d5 795;849 963 795 f1 844;849 906 844 eb 881;828 900 881 d1d4d3 910 d0 963;849 900 963 de 1014 d3 1041;828 900 1041 c9 1091 cbcecd 1123;837 900 1123 d4 1156 dd 1203;855 981 1203 f7 1242;855 909 1242 f3 1285
978 1035 128 f5f9ff 233;930 1035 396 f7faff 425;978 1035 365 fafcff 396;990 1035 425 f1f7ff 501 f6fbff 556
1035 1116 40 fafcff 73;1035 1125 73 f5faff 155;1035 1107 155 f6f9ff 191 f0f5ff 233;1035 1098 270 f1f7ff 304;1092 1149 304 eef4ff 345;1035 1089 345 f2f7ff 396;1035 1122 478 e3ebf9 514 fafcff 556 f3f8ff 585;1116 1170 40 f2f6ff 73;1125 1170 102 dfe9fa 155;1107 1170 155 9dbaea 191 6b98e2 233;1092 1170 396 b6caf2 441 88aae6 478;1122 1170 478 92b1e8 514;1170 1242 155 f3f7fe 233;1149 1215 304 f9fbff 396;1163 1215 270 f4f7ff 304;1092 1170 556 f1f7ff 585;1170 1305 73 f1f3f8 155;1242 1305 155 ea 233;1215 1305 233 edeef0 304 f1 363 edeef2 396;1170 1305 396 f1f3f8 478;1224 1305 478 e9eaee 556;1170 1305 556 f0f2f6 585;1236 1305 585 ed 718;1170 1305 718 f5 771;1215 1305 771 ef 881;1221 1305 881 ee 1041;1242 1305 1041 ea 1364;1230 1305 1364 ed 1484
1035 1107 1327 f1 1364;1035 1104 1364 ed 1398 f5 1428;1107 1191 1327 b9 1364;1104 1152 1364 d1 1398 d9 1428;1152 1230 1364 eb 1398 f1 1428
1305 1320 0 fc 29 f8 117 f2 233 f6 315 f3 396 f8 556 f4 800 f8 881 f4 921 f8 1041 f3 1203 f8 1285 f4 1364 f8 1447 fc 1526`,
`0 72 11 fd 41 f7 95;72 120 11 f2 41;0 72 95 f8 177;0 63 177 f7 261;0 72 261 f8 342;0 63 342 f7 508;0 48 508 f5 592;0 54 592 f7 672;0 30 672 f2 722;0 66 722 f8 838;0 48 838 f5 922;0 75 922 f9 1004;0 30 1004 f3 1088;0 42 1088 f4 1169;0 36 1169 f5 1253;0 72 1253 f9 1335;0 39 1335 f5 1366;0 45 1366 f5 1396;0 60 1396 f8 1499;0 45 1499 f8 1531 fd 1568
120 255 11 f8 95;255 390 11 f5 58;390 525 11 f8 95;525 705 11 f4 56;705 792 11 f8 88;792 927 11 f0 47;927 1062 11 f7 77;1062 1197 11 ef 45;1197 1332 11 f3 95
45 120 1531 ef 1568;120 255 1499 f2 1568;255 390 1499 f8 1545 f2 1568;390 525 1499 f3 1568;525 657 1499 f8 1542 ef 1568;657 792 1499 f3 1568;792 927 1527 ed 1568;927 1062 1499 f3 1568;1062 1215 1527 ed 1568;1215 1332 1499 f2 1568
120 189 95 f5f7fa 149 9bb3c2 177;120 255 177 acdbe5 261;189 255 95 e2e8ec 149 a2bac8 177 - 261 fcfdff 313;255 324 129 c4d0d8 177;255 327 177 9ee9f3 218 72e1ef 261;255 321 261 d2f2f8 295;324 390 129 fb 177;327 390 177 71d8e6 218 4ad2e6 261;321 390 261 def5f9 295
63 198 371 ec 455;198 255 371 ee 455 e9 508;141 198 455 d3 508;120 255 508 df 592;120 192 592 df 638 e8 672;192 255 592 e2 638 da 672;141 255 672 d2 722;141 189 722 df 758 d6 806 dd 838;189 255 722 dc 806 db 838;120 255 838 da 922;120 195 922 f8 963 e6e9e8 1004;195 255 922 fd 963 e6 1004;141 255 1004 dee1e0 1088;141 189 1088 ef 1141;195 255 1088 fc 1141
255 318 388 dfe2e1 426;255 318 460 fc 508 ee 538;255 339 592 e5 638;255 342 638 e9eceb 672;255 330 749 eb 780 ee 838;255 324 903 f4 965 ec 1004;255 327 1221 eb 1303;318 390 388 e0 426;312 390 426 d3 460 d7 508 db 538;318 387 538 c7 592;339 474 592 f5 638;342 426 638 e9 672;306 390 672 c9 721;306 390 721 e3 749;330 390 749 d6 780 cf 808 db 838;312 405 838 cf 870;312 360 870 af 903;360 405 870 ef 903;324 405 903 e5 965 e1 1004;312 375 1004 b2b5b4 1057;306 375 1057 d4 1088;312 366 1088 af 1118;303 366 1118 c7 1169;315 390 1169 dd 1221;327 390 1221 d9 1275 e0e3e2 1305
390 525 342 f0 426;390 465 426 e4 472 dd 508;390 474 508 da 538;387 474 538 ed 592;465 525 426 e9 472 eb 508;474 525 508 f6 592
792 876 377 d3 426;792 849 426 ef 465 e3 508;792 867 508 c9cccb 543 cf 592;792 837 592 dd 637 c6 672;837 885 592 cbcecd 637 dc 672;792 858 672 cf 702 c8 730;792 864 730 c4c7c6 797 c5 838;792 846 838 d6 922;792 882 922 d5 953 cf 1004;792 864 1004 c8cbca 1042 c8 1088 c4c7c6 1126 c8 1169;792 843 1169 cd 1200 f5 1238;849 942 426 fd 465;849 894 465 e8 508;867 942 543 fc 592;858 927 672 f8faf9 702 e5 730;864 927 799 f1 838;846 927 838 ebeeed 890 f1 922;864 927 1004 f4 1042 fc 1126;843 972 1169 ebeeed 1200;843 903 1200 f7 1238
942 1062 342 fafcff 426;987 1062 426 f8fbff 508;939 1062 508 fafcff 592;993 1062 177 f5fbff 261;1008 1062 79 f8fbff 110 f2f7ff 177;993 1062 261 f5f9ff 297
1062 1197 45 f9fbff 95;1062 1137 127 dfe8fa 177 bed1f2 215 ccdbf6 261;1137 1197 127 e3eafa 177 cfdef5 215 c6d7f5 261;1062 1140 304 f6f9ff 342 fafcff 396;1140 1197 304 f2f6ff 342 fafcff 396;1062 1137 426 bad0f1 508;1137 1197 396 dce6f8 455 afc8ef 508;1062 1119 508 edf4fd 541;1119 1209 508 dbe6fa 541;1062 1110 581 f4f8ff 612;1110 1155 581 fafcff 642;1155 1209 581 f5faff 625
1197 1251 95 f3f7ff 177;1251 1332 95 ea 177;1197 1332 177 eff1f4 261;1197 1281 261 f1f6fb 301 f8fbf8 342;1281 1332 261 e5 342;1197 1332 342 eff1f4 396;1197 1278 396 f7faff 508;1278 1332 396 e2 508;1209 1332 508 edeef4 541;1209 1260 541 f0f6ff 577;1260 1332 541 ea 672;1197 1332 672 f3 713;1197 1284 713 f9 838;1284 1332 713 e9 838;1197 1332 838 f2 900;1263 1332 900 e8 1004;1197 1332 1004 f3 1045;1257 1332 1045 ea 1169;1197 1332 1169 f3 1204;1254 1332 1204 eb 1335;1236 1332 1335 ee 1419;1236 1284 1419 f4 1499;1284 1332 1419 e8 1499
1062 1116 1335 fa 1374;1062 1140 1374 e1 1419;1062 1140 1419 e3e4e2 1465;1116 1176 1335 ed 1374;1113 1176 1374 b2b4b3 1419;1140 1236 1419 ee 1465;1176 1236 1374 f4 1419`,
`0 45 0 fd 34;45 120 0 ef 34;120 255 0 f4 34;255 390 0 ec 34;390 525 0 f3 34;525 657 0 ee 28 fb 74;657 792 0 f4 28 fb 57;792 927 0 ee 34;927 1062 0 f3 34;1062 1215 0 ee 34;1215 1332 0 f3 34
0 66 34 f9 80 f8 116;0 69 116 f5 200;0 48 200 f8 282;0 66 282 f6 366;0 51 366 f5 446;0 33 446 f2 502;0 51 502 f8 612;0 42 612 f5 681;0 45 681 f5 778;0 33 778 f2 806;0 48 806 f6 838;0 74 838 f8 902;0 45 902 f4 943;0 39 943 f4 1109;0 48 1109 f5 1152;0 63 1152 f8 1273;0 69 1273 f7 1316;0 39 1316 f5 1439;0 60 1439 f8 1516
45 120 1516 f1 1568;120 255 1516 ef 1557;255 390 1523 e8 1568;390 525 1523 ef 1553;525 657 1523 ed 1557;657 792 1523 ea 1564;792 927 1523 ee 1555;927 1062 1523 ec 1562;1062 1227 1503 f4 1534 ef 1568;1227 1281 1439 ef 1503 eb 1568;1281 1332 1439 ef 1503 f6 1568
120 255 116 a8cddd 200;174 255 200 bbd3dc 239 fc 282;255 327 116 68adc9 164 1788b8 207 87b7c9 245 f4 282;327 408 116 c8d9e1 164 f3f5f7 207
120 174 366 ea 413 f4 446;174 255 366 de 413 c4 446;120 255 446 da 502;120 207 502 dc 558 d8 612;207 255 502 ed 558 dd 612;120 255 612 dd 681;120 189 681 e4 722;189 255 681 e6 722;120 255 722 ca 778;102 192 778 d5 806 cc 838;192 255 778 cc 838 d0 902 ca 943;141 192 838 b9 902 b1 943;102 168 943 ea 999;168 255 943 c9 999 ed 1060 df 1109;36 168 999 fb 1057;114 168 1057 f6 1109;120 255 1109 da 1152;120 201 1152 d6 1187 ee 1239;201 255 1152 eb 1187 f9 1245
255 312 358 f7 396 e3e5e4 530 e0 562 ec 612;312 399 358 e6 396 c8cbca 446;312 447 446 df 480;312 396 480 c5 530;312 384 530 aeb1b0 562;306 384 562 c1c4c3 612;255 342 612 d6 657 d1d4d3 696 cc 735 d2 778;255 330 778 db 829;255 312 829 f4 875 e8 910 e2 943 f3 982;312 333 943 f3 982;342 462 612 ed 657;342 402 657 e0e3e2 696;342 462 696 ee 735;342 399 735 df 778;330 435 778 e5 829;312 435 829 e5 875;312 375 875 ae 909 a5a7a6 943;333 390 943 e4 982
657 732 366 d8 398 e9 446;732 792 366 f0 398 f4 446;663 792 446 e2e5e4 521;663 735 521 d8 553 e1 582 d2 612;735 792 521 e8 582 f3 612;657 792 612 e0 648;657 720 648 dd 681 d6d9d8 730 e4 778;720 792 648 e6 730 e0e3e2 778;585 717 778 f3 818;651 717 818 dd 862;717 792 778 dadddc 862;660 717 862 e5 902 e6e9e8 943;717 792 862 e3 905 db 943;657 792 943 e3 1008;657 738 1008 d2 1038 d5 1075 d4d7d6 1109;738 792 1008 ed 1075 e8 1109;600 720 1109 ef 1142;651 720 1142 df 1180;663 720 1180 d3 1230;720 792 1109 e4 1180 ee 1241
792 876 358 d9 394 b5b8b7 446;792 840 446 c1 474 ac 504;792 864 504 bf 534 c5 582;792 864 582 a2bced 612;792 849 612 a9c2ed 648 a2bced 696;792 852 696 b3c8f1 730;840 927 446 e1 474 df 504;864 927 504 ef 562 ebf0fb 612;849 927 612 d1dff6 648 cdddf4 696;852 927 696 d7e3f6 730
927 1062 116 fafcff 200 - 446 fafcff 504;990 1062 73 f5fbff 116;1002 1062 200 f5f8ff 282 fd 315 fb 393 f5faff 446;990 1062 504 f5faff 573
1062 1215 34 f6fbff 73 fcfdff 116;1062 1107 146 f0f4fd 200;1113 1161 116 e6effa 146;1107 1161 146 84a6e7 200;1062 1197 200 bdd1f3 239;1161 1248 116 f5f9ff 146 f0f6ff 200;1197 1248 200 f2f6ff 282;1062 1197 282 f5faff 325 f9fbff 373;1062 1110 403 e6effa 446 dce7f7 480 eff4fd 530 f9fbff 612;1110 1197 403 b7cdef 446;1110 1161 446 749be1 480 a2bced 530;1161 1239 446 f3f7ff 480 eef5ff 530 f3f8ff 582;1113 1161 582 f4f7ff 612;1197 1281 325 f8faff 381 f4f7ff 446;1215 1269 34 fc 62 fafcff 116;1197 1332 282 f1f3f6 325
1269 1332 34 e9 62 e5 116;1248 1332 116 ec 282;1281 1332 325 e5 446;1239 1332 446 ecedf0 530;1239 1284 530 f2 612;1284 1332 530 e8 612;1197 1332 612 f3 657;1251 1332 657 ec 778;1230 1332 778 ef 862;1275 1332 862 e3 943;1197 1332 943 f3 1027;1197 1287 1027 f7 1109;1287 1332 1027 ed 1109;1197 1332 1109 f3 1150;1257 1332 1150 ea 1273;1197 1332 1273 f3 1357;1248 1332 1357 ea 1439;1227 1332 1439 ef 1503
1062 1143 1325 edf3fd 1357;1143 1197 1325 f5f9ff 1357;1062 1143 1357 6190df 1393 bfd2f3 1439;1143 1197 1357 6392e0 1393 a9c2ed 1439;1062 1119 1439 f2f6fe 1475;1119 1227 1439 e7eefb 1475;1062 1227 1503 f4 1534 f2 1568`,
`0 45 0 fd 29 f8 73;45 120 0 f2 29 f9 73;120 255 0 ef 26 f7 73;255 390 0 ea 40;390 525 0 ef 22 f7 73;525 657 0 ed 26 f7 73;657 792 0 eb 33 f9 73;792 927 0 ee 24 f7 73;927 1062 0 ed 31 f9 73;1062 1128 0 f0 35;1128 1227 0 ed 40;1227 1281 0 f3 15 eb 44 f4 73;1281 1332 0 f4 15 f8 44 ea 73
0 30 117 f2 233;0 48 233 f6 315;0 33 315 f3 396;0 72 396 f8 478;0 63 478 f7 556;0 45 556 f3 638;0 42 638 f4 718;0 33 718 f3 800;0 66 800 f9 881;0 33 881 f3 921;0 63 921 f8 1041;0 51 1041 f7 1123;0 42 1123 f3 1203;0 48 1203 f5 1285;0 39 1285 f4 1364;0 74 1364 f8 1446;0 60 1446 f8 1493 fd 1526
60 132 1493 ef 1526;132 303 1479 f4 1526;303 525 1491 f1 1526;525 696 1493 ef 1526;696 792 1495 f1 1526;792 880 1491 ef 1526;880 927 1497 f2 1526;927 1062 1471 f5 1526;1062 1332 1486 f4 1526
120 165 117 fafcff 166 f6f9ff 233;120 255 233 dfe3fc 315;165 255 117 a4b5f9 166 99aded 197 869ef3 233;255 333 111 d7defc 139;255 306 139 9fb2ef 181 c3cee4 233;255 339 233 bac6f2 288;306 390 139 8ba1ea 181 859df0 233;333 390 111 e5eafd 139;339 390 233 c4cdef 288
120 180 350 f7 396;180 255 350 e9 396;120 255 396 da 478;120 174 478 fa 523 f4 556;174 255 478 e0 523 cd 556;120 255 556 da 638;120 186 638 f1f3f2 680 ecefee 718;186 255 638 df 678 ee 718;120 255 718 e2 800 fb 832
255 309 358 fd 396 f0 428 f8 476 eef1f0 509 e8 609 e3 653 ef 680 e6 749 e4 800 de 830 e2 881 fc 921 f1 963 - 997 f5 1041;309 390 358 dc 396 eb 428;324 375 428 cc 476;330 390 476 e9 509;342 390 509 e0e4e2 653 f4 680 de 718 e4 800 de 830 e1 881;309 342 509 e7 609 e3 653 ef 680 e5 749 e3 800 de 830 e1 881;321 390 881 e3 921 d2 963;309 390 963 eb 997 d5 1041;303 390 1041 d2 1070 ced1d0 1123;312 447 1203 fb 1234
390 447 352 f0 396 eb 428 f3 476 e9 509 ef 556 e3e6e5 609 e0 653 f3 718 e4e7e6 800 dc 837 e5e8e7 881 e3 963 ec 1014 e0 1041 e5 1123 f6 1170 f9 1203;396 447 609 df 653;447 525 352 e9 396 df 478 e0 527 d4 556 e7 609 e0 664 e4 718 e5e8e7 800 dc 837 f2 881 e3 963 db 1014 df 1041 e6 1123;441 525 1123 d9 1170 d6 1203;447 525 1203 f3 1264
678 741 350 d7 396;741 792 350 fd 396;657 792 396 ef 478;657 735 478 d1d4d3 514 dbdedd 556;735 792 478 e9eceb 514 f5 556;657 792 556 e2 638;657 705 618 e2 647 f5 684 ee 718;705 792 618 d8 684 d6 718;657 792 718 e3 800;657 738 800 da 841 d4 881;738 792 800 e8 841 e0 881;672 792 881 d7 930;672 726 930 d4 977 d1 1005 d6 1041;726 792 930 ee 977 e8 1005 ec 1041;657 792 1041 e1 1123;657 705 1123 dadddc 1165 e7 1203;705 792 1123 dd 1165 da 1203;663 723 1203 dadcdb 1280;723 792 1203 e7 1280
792 843 366 c5 396;843 894 366 dfe2e1 396;792 879 396 bd 435 bbbebd 520 abadac 556;792 837 556 e1e9f4 587;837 906 556 e9f0f8 587;792 855 587 9fbaeb 638 8aace8 669 b5cbf0 718;855 906 587 c5d7f3 638 c1d3f3 669 c7d9f2 718
927 1062 73 fafcff 146;939 1062 233 fafcff 315;996 1062 146 f5f8ff 233;993 1062 352 f5faff 396;927 1062 396 fafcff 435;1014 1062 435 f1f7ff 556
1062 1182 35 f8fbff 73;1062 1197 73 fafcff 109;1062 1197 109 ebf1fc 155;1062 1125 155 d5e2f8 190 c4d5f3 233;1125 1197 155 c0d3f2 190 a4bfeb 233;1131 1263 233 f9fbff 352;1062 1206 279 f4f7ff 315;1062 1131 315 f6faff 352;1062 1140 396 e3ebfa 425;1062 1140 425 b4caf0 458;1062 1149 458 adc5ee 501 fafcff 556;1140 1197 396 e5ecfa 425 b6ccf0 458;1149 1197 458 c3d4f3 501 fafcff 556;1062 1110 556 eff5ff 583;1110 1227 556 f4f8ff 583;1197 1332 73 eff1f4 155;1197 1266 155 f6fbff 233;1191 1262 352 f4faff 396;1197 1332 396 eff1f4 458;1197 1251 458 f2f6ff 556
1266 1332 155 e5 233;1263 1332 233 e7 396;1251 1332 458 ea 556;1227 1332 556 f0 613;1278 1332 613 e3 718;1242 1332 718 ec 881;1263 1332 881 e7 1041;1209 1332 1041 f2 1123;1209 1281 1123 fa 1203;1281 1332 1123 e6 1203;1266 1332 1203 e7 1364;1245 1332 1364 ed 1486
1062 1113 1300 fafcff 1335 8eb0e8 1364;1062 1110 1364 adc7ef 1418 fafcff 1446;1113 1203 1300 e7eefb 1335 4884dc 1364;1110 1167 1364 b4c8f1 1418;1122 1167 1418 e9f0fd 1446;1167 1245 1364 dae5f8 1418`
];

document.querySelectorAll('.masked svg').forEach((svg, i) => {
  svg.setAttribute('preserveAspectRatio', 'none');
  for (const run of cards[i].split(/[;\n]/)) {
    const [top, bottom, ...cells] = run.trim().split(/\s+/);
    for (let k = 0; k + 2 < cells.length; k += 2) {
      const c = cells[k + 1];
      if (c === '-') continue;
      const r = document.createElementNS('http://www.w3.org/2000/svg', 'rect');
      r.setAttribute('x', cells[k]);
      r.setAttribute('y', top);
      r.setAttribute('width', Math.max(0, cells[k + 2] - cells[k]));
      r.setAttribute('height', bottom - top);
      r.setAttribute('fill', '#' + (c.length === 2 ? c.repeat(3) : c));
      svg.append(r);
    }
  }
});
```
